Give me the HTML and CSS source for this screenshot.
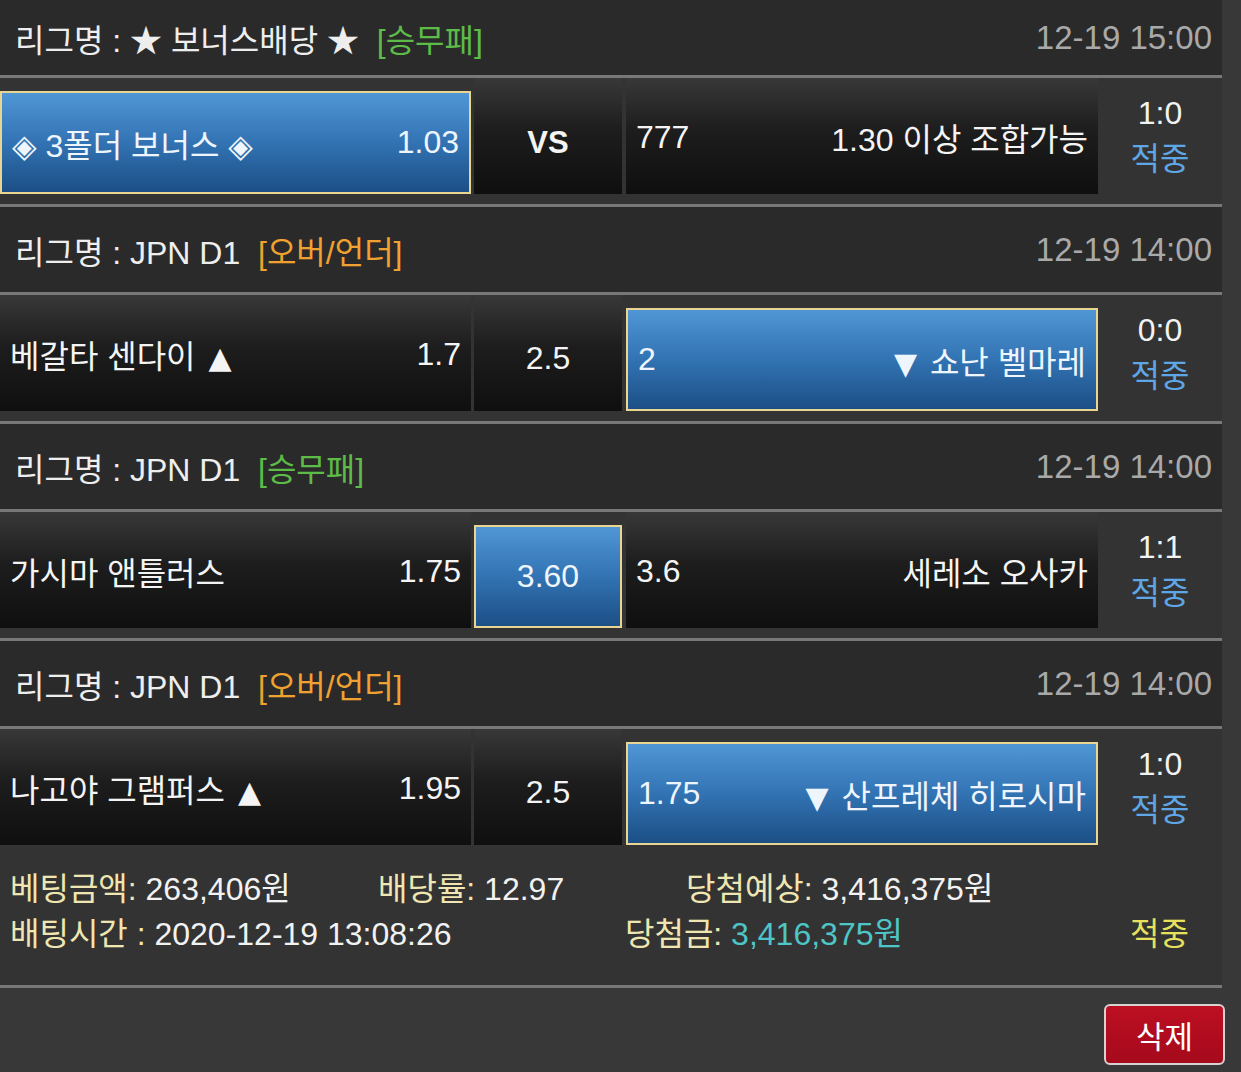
FILE: index.html
```html
<!DOCTYPE html>
<html lang="ko">
<head>
    <meta charset="UTF-8">
    <meta name="viewport" content="width=device-width, initial-scale=1.0">
    <title>배팅내역</title>
    <link rel="stylesheet" href="styles.css">
</head>
<body>
<div class="slip">
    <div class="league league-first">
        <div class="league-name">리그명 : ★ 보너스배당 ★  <span class="tag tag-green">[승무패]</span></div>
        <div class="league-date">12-19 15:00</div>
    </div>
    <div class="match">
        <div class="cell home picked">
            <span><span class="diamond">◈</span> 3폴더 보너스 <span class="diamond">◈</span></span>
            <span>1.03</span>
        </div>
        <div class="cell mid"><span class="vs">VS</span></div>
        <div class="cell away">
            <span>777</span>
            <span>1.30 이상 조합가능</span>
        </div>
        <div class="result">
            <span>1:0</span>
            <span class="hit">적중</span>
        </div>
    </div>

    <div class="league">
        <div class="league-name">리그명 : JPN D1  <span class="tag tag-orange">[오버/언더]</span></div>
        <div class="league-date">12-19 14:00</div>
    </div>
    <div class="match">
        <div class="cell home">
            <span>베갈타 센다이 <span class="arrow">▲</span></span>
            <span>1.7</span>
        </div>
        <div class="cell mid"><span>2.5</span></div>
        <div class="cell away picked">
            <span>2</span>
            <span><span class="arrow">▼</span> 쇼난 벨마레</span>
        </div>
        <div class="result">
            <span>0:0</span>
            <span class="hit">적중</span>
        </div>
    </div>

    <div class="league">
        <div class="league-name">리그명 : JPN D1  <span class="tag tag-green">[승무패]</span></div>
        <div class="league-date">12-19 14:00</div>
    </div>
    <div class="match">
        <div class="cell home">
            <span>가시마 앤틀러스</span>
            <span>1.75</span>
        </div>
        <div class="cell mid picked"><span>3.60</span></div>
        <div class="cell away">
            <span>3.6</span>
            <span>세레소 오사카</span>
        </div>
        <div class="result">
            <span>1:1</span>
            <span class="hit">적중</span>
        </div>
    </div>

    <div class="league">
        <div class="league-name">리그명 : JPN D1  <span class="tag tag-orange">[오버/언더]</span></div>
        <div class="league-date">12-19 14:00</div>
    </div>
    <div class="match">
        <div class="cell home">
            <span>나고야 그램퍼스 <span class="arrow">▲</span></span>
            <span>1.95</span>
        </div>
        <div class="cell mid"><span>2.5</span></div>
        <div class="cell away picked">
            <span>1.75</span>
            <span><span class="arrow">▼</span> 산프레체 히로시마</span>
        </div>
        <div class="result">
            <span>1:0</span>
            <span class="hit">적중</span>
        </div>
    </div>

    <div class="summary">
        <div class="summary-line">
            <div class="col-a"><span class="label">베팅금액:</span> 263,406원</div>
            <div class="col-b"><span class="label">배당률:</span> 12.97</div>
            <div class="col-c"><span class="label">당첨예상:</span> 3,416,375원</div>
        </div>
        <div class="summary-line">
            <div class="col-d"><span class="label">배팅시간 :</span> 2020-12-19 13:08:26</div>
            <div class="col-e"><span class="label">당첨금:</span> <span class="won">3,416,375원</span></div>
            <div class="col-f">적중</div>
        </div>
    </div>
</div>

<div class="actions">
    <button class="btn-delete">삭제</button>
</div>
</body>
</html>
```

FILE: styles.css
```css
body {
    margin: 0;
    background: #383838;
    font-family: "Liberation Sans", "Noto Sans CJK KR", sans-serif;
    font-size: 32px;
    color: #f2f2f2;
}

.slip {
    width: 1222px;
    background: #333333;
}

.league {
    height: 85px;
    display: flex;
    justify-content: space-between;
    align-items: center;
    padding: 0 10px 0 15px;
    background: #2a2a2a;
    border-top: 3px solid #787878;
}

.league-first {
    height: 75px;
    border-top: none;
}

.league-name {
    color: #eeeeee;
    white-space: pre;
}

.tag-green {
    color: #5dbb48;
}

.tag-orange {
    color: #f0a12f;
}

.league-date {
    font-size: 33px;
    color: #a9a9a9;
}

.match {
    display: flex;
    height: 116px;
    padding-bottom: 10px;
    border-top: 3px solid #787878;
    background: #333333;
}

.cell {
    box-sizing: border-box;
    display: flex;
    justify-content: space-between;
    align-items: center;
    padding: 2px 10px 0;
    background: linear-gradient(to bottom, #383838 0%, #1d1d1d 45%, #0f0f0f 100%);
    color: #f4f4f4;
}

.home {
    width: 471px;
}

.mid {
    width: 148px;
    margin-left: 3px;
    justify-content: center;
    padding-top: 10px;
}

.away {
    width: 472px;
    margin-left: 4px;
}

.cell.picked {
    margin-top: 13px;
    padding-top: 0;
    border: 2px solid #e8d592;
    background: linear-gradient(to bottom, #5096d5 0%, #3273b3 50%, #1c4f86 100%);
    color: #eef5fc;
}

.vs {
    font-weight: bold;
    font-size: 31px;
    padding-top: 4px;
}

.diamond {
    font-family: "DejaVu Sans", sans-serif;
    font-size: 32px;
}

.arrow {
    font-family: "DejaVu Sans", sans-serif;
    font-size: 30px;
    margin: 0 4px;
}

.result {
    width: 124px;
    display: flex;
    flex-direction: column;
    justify-content: center;
    align-items: center;
    line-height: 46px;
}

.hit {
    color: #5ea6e6;
}

.summary {
    padding: 12px 10px 28px;
    border-bottom: 3px solid #787878;
    line-height: 45px;
}

.summary-line {
    display: flex;
}

.label {
    color: #efe6b1;
}

.col-a {
    width: 368px;
}

.col-b {
    width: 308px;
}

.col-d {
    width: 615px;
}

.col-e {
    width: 505px;
}

.col-f {
    color: #e7e15c;
}

.won {
    color: #4ec5c6;
}

.actions {
    display: flex;
    justify-content: flex-end;
    padding: 16px 16px 0 0;
}

.btn-delete {
    width: 121px;
    height: 61px;
    border: 2px solid #d9d0d0;
    border-radius: 6px;
    background: linear-gradient(to bottom, #bd0f22, #a40a1b);
    color: #ffffff;
    font-family: "Liberation Sans", "Noto Sans CJK KR", sans-serif;
    font-size: 31px;
    padding: 0;
}
```
